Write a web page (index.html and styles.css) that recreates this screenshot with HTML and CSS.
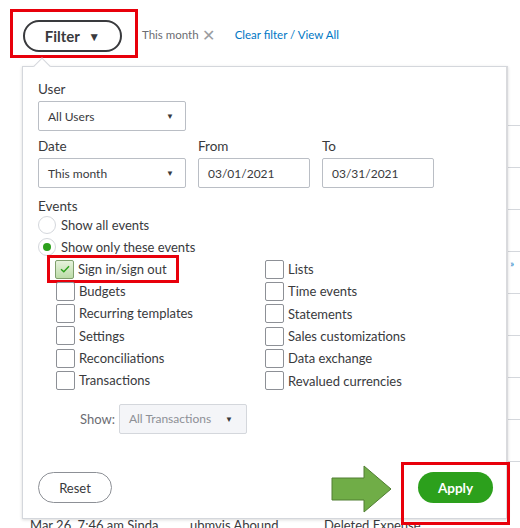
FILE: index.html
```html
<!DOCTYPE html>
<html lang="en">
<head>
    <meta charset="UTF-8">
    <meta name="viewport" content="width=device-width, initial-scale=1.0">
    <title>Audit Log Filter</title>
    <link rel="stylesheet" href="styles.css">
</head>
<body>
    <div class="filter-bar">
        <div class="mark mark-filter">
            <button class="btn-filter">Filter <span class="caret">&#9660;</span></button>
        </div>
        <span class="chip">This month <span class="chip-x">&#10005;</span></span>
        <a class="link" href="#">Clear filter / View All</a>
    </div>

    <!-- log table behind the dropdown -->
    <div class="log">
        <div class="log-row"></div>
        <div class="log-row"></div>
        <div class="log-row"></div>
        <div class="log-row"></div>
        <div class="log-row"><span class="log-dot">&#187;</span></div>
        <div class="log-row"></div>
        <div class="log-row"></div>
        <div class="log-row"></div>
        <div class="log-row"></div>
        <div class="log-row log-last">
            <span class="c1">Mar 26. 7:46 am Sinda...</span>
            <span class="c2">ubmvis Abound</span>
            <span class="c3">Deleted Expense</span>
        </div>
    </div>

    <div class="panel">
        <div class="field">
            <label>User</label>
            <div class="select">All Users <span class="caret-sm">&#9660;</span></div>
        </div>

        <div class="field-row">
            <div class="field">
                <label>Date</label>
                <div class="select">This month <span class="caret-sm">&#9660;</span></div>
            </div>
            <div class="field">
                <label>From</label>
                <div class="input">03/01/2021</div>
            </div>
            <div class="field">
                <label>To</label>
                <div class="input">03/31/2021</div>
            </div>
        </div>

        <div class="events">
            <label>Events</label>
            <div class="radio-row"><span class="radio"></span>Show all events</div>
            <div class="radio-row"><span class="radio on"></span>Show only these events</div>

            <div class="checks">
                <div class="col">
                    <div class="mark mark-check">
                        <div class="check-row"><span class="box on">
                            <svg width="10" height="8" viewBox="0 0 10 8"><path d="M1 4.2 L3.8 6.8 L9 1.2" fill="none" stroke="#2ca01c" stroke-width="1.4"/></svg>
                        </span>Sign in/sign out</div>
                    </div>
                    <div class="check-row"><span class="box"></span>Budgets</div>
                    <div class="check-row"><span class="box"></span>Recurring templates</div>
                    <div class="check-row"><span class="box"></span>Settings</div>
                    <div class="check-row"><span class="box"></span>Reconciliations</div>
                    <div class="check-row"><span class="box"></span>Transactions</div>
                </div>
                <div class="col">
                    <div class="check-row"><span class="box"></span>Lists</div>
                    <div class="check-row"><span class="box"></span>Time events</div>
                    <div class="check-row"><span class="box"></span>Statements</div>
                    <div class="check-row"><span class="box"></span>Sales customizations</div>
                    <div class="check-row"><span class="box"></span>Data exchange</div>
                    <div class="check-row"><span class="box"></span>Revalued currencies</div>
                </div>
            </div>

            <div class="show-row">
                <span>Show:</span>
                <div class="select select-off">All Transactions <span class="caret-sm">&#9660;</span></div>
            </div>
        </div>

        <div class="panel-foot">
            <button class="btn-reset">Reset</button>
            <div class="foot-right">
                <svg class="arrow" width="62" height="48" viewBox="0 0 62 48">
                    <path d="M1 13 H33 V1 L60 24 L33 47 V35 H1 Z" fill="#70ad47" stroke="#507e32" stroke-width="1"/>
                </svg>
                <div class="mark mark-apply">
                    <button class="btn-apply">Apply</button>
                </div>
            </div>
        </div>
    </div>
</body>
</html>
```

FILE: styles.css
```css
body {
    margin: 0;
    font-family: Lato, "Open Sans", sans-serif;
    color: #393a3d;
    background: #fff;
    position: relative;
    height: 528px;
    overflow: hidden;
}

/* red annotation frames */
.mark {
    border: 3px solid #e8000b;
    box-sizing: border-box;
}

.filter-bar {
    display: flex;
    align-items: center;
    padding: 9px 0 0 10px;
}
.mark-filter {
    width: 128px;
    height: 49px;
    padding: 8px 0 0 10px;
}
.btn-filter {
    width: 99px;
    height: 32px;
    border: 2px solid #393a3d;
    border-radius: 16px;
    background: #fff;
    font-family: inherit;
    font-size: 15px;
    font-weight: bold;
    color: #393a3d;
    padding: 0;
}
.caret {
    font-size: 12px;
    margin-left: 5px;
    vertical-align: 1px;
}
.chip {
    margin-left: 4px;
    margin-top: 2px;
    font-size: 11.5px;
    color: #6b6c72;
    display: flex;
    align-items: center;
}
.chip-x {
    font-size: 16px;
    color: #9a9ca1;
    margin-left: 3px;
}
.link {
    margin-left: 20px;
    margin-top: 2px;
    font-size: 11.5px;
    color: #0077c5;
    text-decoration: none;
}

/* log table behind */
.log {
    position: absolute;
    top: 84px;
    left: 22px;
    right: 0;
}
.log-row {
    height: 41px;
    border-bottom: 1px solid #d4d7dc;
    position: relative;
}
.log-dot {
    position: absolute;
    right: 6px;
    top: 6px;
    font-size: 9px;
    color: #0077c5;
}
.log-last {
    border-bottom: none;
    display: flex;
    font-size: 13px;
    color: #393a3d;
}
.log-last span {
    position: relative;
    top: 55px;
}
.c1 { margin-left: 8px; width: 160px; }
.c2 { width: 134px; }

/* dropdown panel */
.panel {
    position: absolute;
    top: 66px;
    left: 22px;
    width: 486px;
    height: 453px;
    box-sizing: border-box;
    background: #fff;
    border: 1px solid #d4d7dc;
    border-right: 2px solid #d9dadd;
    box-shadow: 0 1px 3px rgba(0, 0, 0, 0.15);
    padding: 14px 0 0 15px;
    display: flex;
    flex-direction: column;
}
.panel::before {
    content: "";
    position: absolute;
    top: -7px;
    left: 13px;
    width: 11px;
    height: 11px;
    background: #fff;
    border-left: 1px solid #d4d7dc;
    border-top: 1px solid #d4d7dc;
    transform: rotate(45deg);
}

.field label,
.events > label {
    display: block;
    font-size: 13.5px;
    margin-bottom: 4px;
}
.field-row {
    display: flex;
    gap: 12px;
    margin-top: 7px;
}
.select,
.input {
    box-sizing: border-box;
    height: 30px;
    border: 1px solid #babec5;
    border-radius: 2px;
    font-size: 12px;
    display: flex;
    align-items: center;
    padding: 0 9px;
    background: #fff;
}
.select {
    width: 148px;
    justify-content: space-between;
}
.input {
    width: 112px;
}
.caret-sm {
    font-size: 8px;
    color: #393a3d;
    margin-right: 2px;
}

.events {
    margin-top: 10px;
}
.events > label {
    margin-bottom: 0;
}
.radio-row {
    display: flex;
    align-items: center;
    height: 22px;
    font-size: 13px;
    color: #393a3d;
}
.radio {
    width: 16px;
    height: 16px;
    border: 1px solid #d4d7dc;
    border-radius: 50%;
    margin-right: 5px;
    display: flex;
    align-items: center;
    justify-content: center;
}
.radio.on::after {
    content: "";
    width: 8px;
    height: 8px;
    border-radius: 50%;
    background: #2ca01c;
}

.checks {
    display: flex;
    margin-left: 10px;
}
.col {
    width: 209px;
}
.check-row {
    display: flex;
    align-items: center;
    height: 22.3px;
    font-size: 13px;
}
.box {
    box-sizing: border-box;
    width: 19px;
    height: 19px;
    border: 1px solid #8d9096;
    border-radius: 2px;
    margin: 0 4px 0 8px;
    display: flex;
    align-items: center;
    justify-content: center;
}
.box.on {
    border-color: #7f9f6d;
    background: linear-gradient(#e6f2dc, #bcdca8);
}
.mark-check {
    width: 132px;
    height: 28px;
    margin: -3px 0 -3px -1px;
    padding: 0;
}
.mark-check .check-row {
    height: 22px;
}
.mark-check .box {
    margin-left: 5px;
}

.show-row {
    display: flex;
    align-items: center;
    margin-top: 12px;
    margin-left: 42px;
    font-size: 13px;
    color: #6b6c72;
}
.show-row span {
    margin-right: 4px;
}
.select-off {
    width: 128px;
    background: #f4f5f8;
    border-color: #d4d7dc;
    color: #8d9096;
}

.panel-foot {
    margin-top: auto;
    margin-bottom: -7px;
    display: flex;
    align-items: flex-start;
    justify-content: space-between;
}
.btn-reset {
    width: 74px;
    height: 31px;
    margin-top: 10px;
    border: 1px solid #8d9096;
    border-radius: 16px;
    background: #fff;
    font-family: inherit;
    font-size: 13px;
    color: #393a3d;
}
.foot-right {
    display: flex;
    align-items: flex-start;
    margin-right: -4px;
}
.arrow {
    margin: 3px 8px 0 0;
}
.mark-apply {
    width: 109px;
    height: 63px;
    padding: 7px 14px 19px 14px;
    position: relative;
    z-index: 1;
}
.btn-apply {
    width: 75px;
    height: 31px;
    border: none;
    border-radius: 16px;
    background: #2ca01c;
    color: #fff;
    font-family: inherit;
    font-size: 13.5px;
    font-weight: bold;
}
```
